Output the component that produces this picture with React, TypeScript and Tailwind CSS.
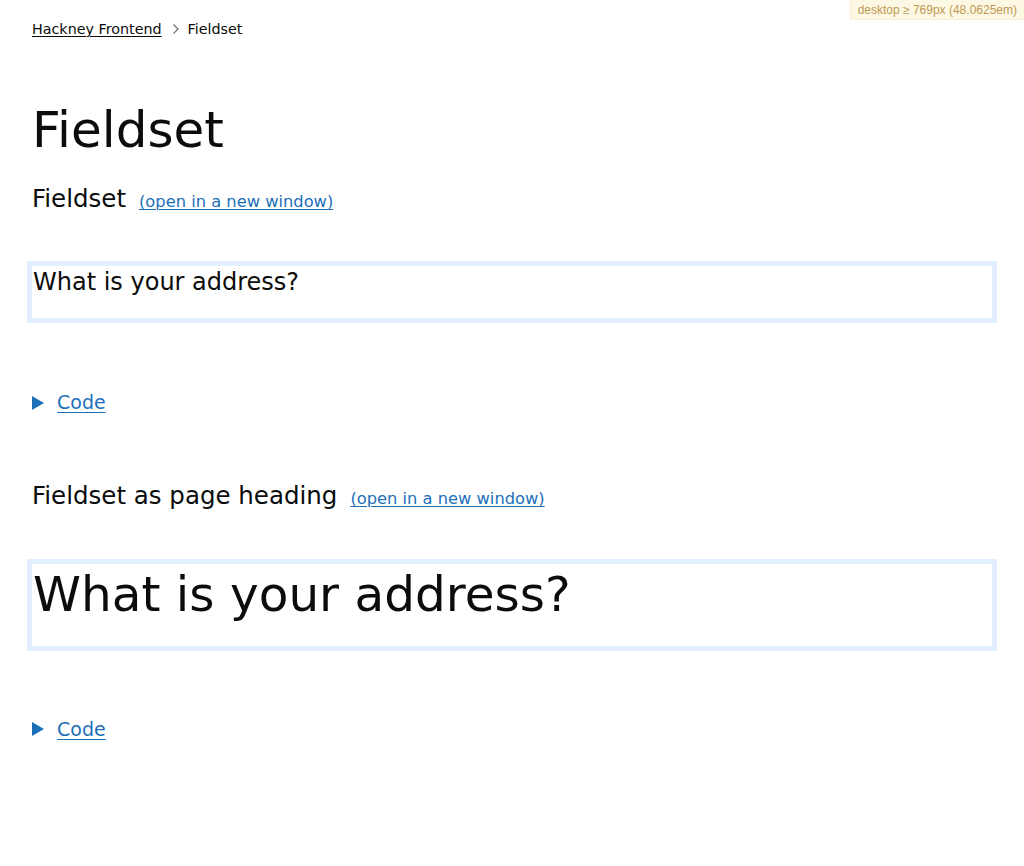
const FONT = "font-['DejaVu_Sans',sans-serif]";

function CodeToggle() {
  return (
    <div className="flex items-center gap-[13px] text-[19px] leading-[25px] text-[#1d70b8]">
      <svg width="12" height="14" viewBox="0 0 12 14" className="shrink-0">
        <polygon points="0,0 12,7 0,14" fill="#1d70b8" />
      </svg>
      <a href="#" className="underline underline-offset-[3px] decoration-1">
        Code
      </a>
    </div>
  );
}

function Example({
  title,
  large,
}: {
  title: string;
  large?: boolean;
}) {
  return (
    <section>
      <div className="flex items-baseline gap-[13px]">
        <h2 className="text-[24.5px] leading-[30px] text-[#0b0c0c]">{title}</h2>
        <a href="#" className="text-[16.3px] text-[#1d70b8] underline underline-offset-2 decoration-1">
          (open in a new window)
        </a>
      </div>

      {/* preview frame */}
      <div
        className={`-mx-[5px] mt-[47px] border-[5px] border-[#e1effe] px-[1px] ${
          large ? "h-[92px]" : "h-[62px]"
        }`}
      >
        {large ? (
          <h1 className="text-[48.5px] leading-[56px] text-[#0b0c0c] pt-[2px]">What is your address?</h1>
        ) : (
          <p className="text-[24px] leading-[30px] text-[#0b0c0c] pt-[1px]">What is your address?</p>
        )}
      </div>

      <div className={large ? "mt-[66px]" : "mt-[67px]"}>
        <CodeToggle />
      </div>
    </section>
  );
}

export default function App() {
  return (
    <div className={`relative min-h-[866px] bg-white ${FONT}`}>
      {/* breakpoint badge */}
      <div className="absolute top-0 right-0 bg-[#fcf8e3] border-l border-b border-[#fbeed5] px-[7px] h-[20px] flex items-center text-[12px] text-[#c09853] font-['Liberation_Sans',sans-serif]">
        desktop ≥ 769px (48.0625em)
      </div>

      <div className="px-8">
        <nav className="pt-[19px] flex items-center text-[14.3px] leading-[20px] text-[#0b0c0c]">
          <a href="#" className="underline underline-offset-2 decoration-1">
            Hackney Frontend
          </a>
          <svg width="8" height="12" viewBox="0 0 8 12" className="ml-[10px] mr-[8px]">
            <polyline points="1.5,1.5 6,6 1.5,10.5" fill="none" stroke="#6f777b" strokeWidth="1.3" />
          </svg>
          <span>Fieldset</span>
        </nav>

        <h1 className="mt-[66px] text-[50px] leading-[50px] text-[#0b0c0c]">Fieldset</h1>

        <div className="mt-[29px]">
          <Example title="Fieldset" />
        </div>

        <div className="mt-[66px]">
          <Example title="Fieldset as page heading" large />
        </div>
      </div>
    </div>
  );
}
